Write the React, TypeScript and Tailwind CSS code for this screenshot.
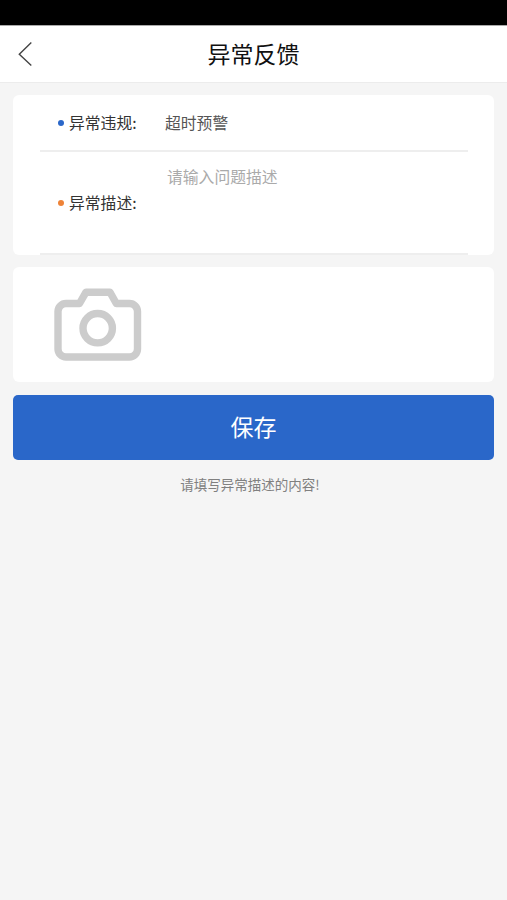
import type { ReactNode } from "react";

interface FieldLabelProps {
  dotClass: string;
  children: ReactNode;
}

function FieldLabel({ dotClass, children }: FieldLabelProps) {
  return (
    <div className="flex items-center w-[107px] flex-shrink-0 pl-[18px]">
      <span className={`w-[6px] h-[6px] rounded-full mr-[5px] ${dotClass}`} />
      <span className="text-[15.8px] leading-6 text-[#333] whitespace-nowrap">{children}</span>
    </div>
  );
}

function BackIcon() {
  return (
    <svg width="16" height="26" viewBox="0 0 16 26" fill="none" stroke="#444" strokeWidth="1.4">
      <path d="M14.3 1.6 2.3 13.2 14.3 24.6" />
    </svg>
  );
}

function CameraIcon() {
  return (
    <svg
      width="88"
      height="74"
      viewBox="0 0 88 74"
      fill="none"
      stroke="#cccccc"
      strokeWidth="7.4"
      strokeLinejoin="round"
    >
      <path d="M12 15.5H25.5L32 4.2H56L62.3 15.5H75.5A8 8 0 0 1 83.5 23.5V61A8 8 0 0 1 75.5 69H12A8 8 0 0 1 4 61V23.5A8 8 0 0 1 12 15.5Z" />
      <circle cx="43.7" cy="40.2" r="14.7" />
    </svg>
  );
}

export default function App() {
  return (
    <div className="min-h-screen bg-[#f5f5f5] font-['Noto_Sans_CJK_SC',sans-serif]">
      {/* Status bar */}
      <div className="h-[25px] bg-black" />

      {/* Header */}
      <header className="flex items-center h-[58px] bg-white border-t border-t-[#aaa] border-b border-b-[#ececec]">
        <button className="w-[60px] pl-[17px]" aria-label="返回">
          <BackIcon />
        </button>
        <h1 className="flex-1 pb-[2px] text-center text-[23px] leading-8 text-[#111]">异常反馈</h1>
        <div className="w-[60px]" />
      </header>

      <main className="px-[13px] pt-3">
        {/* Form */}
        <section className="h-[160px] bg-white rounded-md pl-[27px] pr-[26px]">
          <div className="flex items-center h-[57px] border-b-2 border-[#eeeeee]">
            <FieldLabel dotClass="bg-[#2a67c9]">异常违规:</FieldLabel>
            <span className="pl-[18px] text-[15.8px] leading-6 text-[#555]">超时预警</span>
          </div>
          <div className="flex items-center h-[103px] border-b-2 border-[#eeeeee]">
            <FieldLabel dotClass="bg-[#ee8338]">异常描述:</FieldLabel>
            <textarea
              className="flex-1 h-[76px] pl-5 text-[15.8px] leading-6 resize-none outline-none placeholder:text-[#aaa]"
              placeholder="请输入问题描述"
            />
          </div>
        </section>

        {/* Photo */}
        <section className="mt-3 h-[115px] bg-white rounded-md pl-[41px] pt-[21px]">
          <CameraIcon />
        </section>

        <button className="mt-[13px] pb-[2px] w-full h-[65px] block bg-[#2a67c9] rounded-[5px] text-white text-[23px]">
          保存
        </button>
        <p className="mt-[14px] pr-[7px] text-center text-[13.5px] leading-5 text-[#808080]">
          请填写异常描述的内容!
        </p>
      </main>
    </div>
  );
}
